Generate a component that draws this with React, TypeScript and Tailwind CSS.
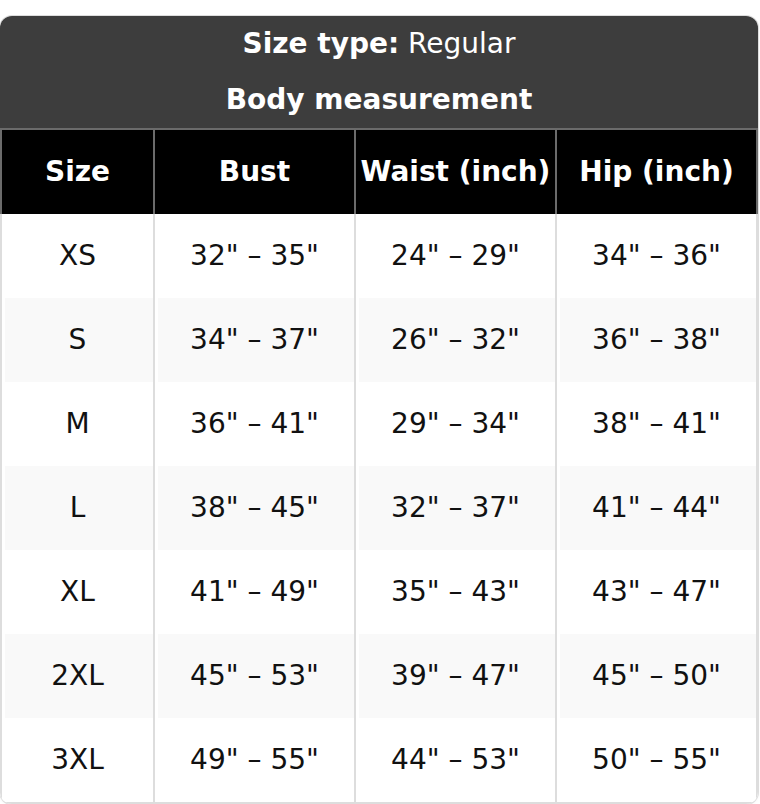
import React from "react";

const rows = [
  ["XS", '32" – 35"', '24" – 29"', '34" – 36"'],
  ["S", '34" – 37"', '26" – 32"', '36" – 38"'],
  ["M", '36" – 41"', '29" – 34"', '38" – 41"'],
  ["L", '38" – 45"', '32" – 37"', '41" – 44"'],
  ["XL", '41" – 49"', '35" – 43"', '43" – 47"'],
  ["2XL", '45" – 53"', '39" – 47"', '45" – 50"'],
  ["3XL", '49" – 55"', '44" – 53"', '50" – 55"'],
];

const headers = ["Size", "Bust", "Waist (inch)", "Hip (inch)"];

export default function App() {
  return (
    <div className="bg-white pt-[16px] font-['DejaVu_Sans',sans-serif] text-[28px]">
      <div className="w-[758px] overflow-hidden rounded-[12px] shadow-[0_0_0_1px_#dddddd,0_1px_3px_rgba(0,0,0,0.08)]">
        <div className="bg-[#3d3d3d] pt-[7px] pb-[7px] text-center text-white">
          <div className="h-[42px] leading-[42px]">
            <span className="font-bold">Size type:</span> Regular
          </div>
          <div className="mt-[14px] h-[42px] font-bold leading-[42px]">Body measurement</div>
        </div>

        <div className="grid grid-cols-[153px_201px_201px_203px] border-t-2 border-[#6b6b6b] bg-black">
          {headers.map((h, i) => (
            <div
              key={h}
              className={`flex h-[84px] items-center justify-center border-l-2 border-[#6b6b6b] font-bold text-white ${
                i === 3 ? "border-r-2" : ""
              }`}
            >
              {h}
            </div>
          ))}
        </div>

        {rows.map((r, ri) => (
          <div
            key={r[0]}
            className={`grid grid-cols-[153px_201px_201px_203px] ${ri === rows.length - 1 ? "border-b-2 border-[#dddddd]" : ""}`}
          >
            {r.map((c, ci) => (
              <div
                key={ci}
                className={`flex h-[84px] items-center justify-center border-l-2 border-[#dddddd] text-[#111111] ${
                  ci === 3 ? "border-r-2" : ""
                } ${ri % 2 === 1 ? "bg-[#f9f9f9] shadow-[inset_3px_0_0_#ffffff]" : "bg-white"}`}
              >
                {c}
              </div>
            ))}
          </div>
        ))}
      </div>
    </div>
  );
}
